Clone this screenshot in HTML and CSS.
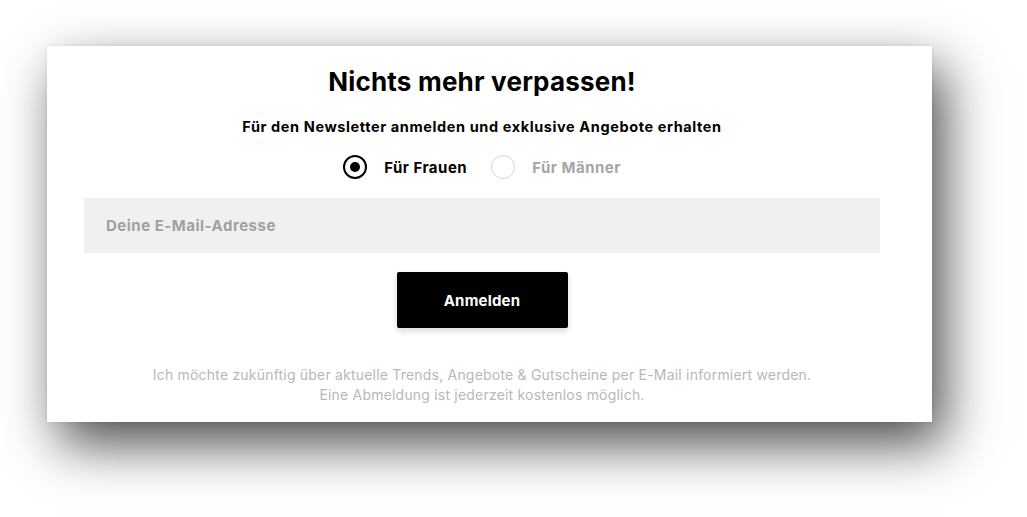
FILE: index.html
```html
<!DOCTYPE html>
<html lang="de">
<head>
<meta charset="utf-8">
<title>Newsletter</title>
<link rel="stylesheet" href="styles.css">
</head>
<body>
<div class="card">
  <h1 class="title">Nichts mehr verpassen!</h1>
  <p class="subtitle">Für den Newsletter anmelden und exklusive Angebote erhalten</p>
  <div class="radios">
    <label class="radio">
      <span class="dot dot-on"></span>
      <span class="radio-label">Für Frauen</span>
    </label>
    <label class="radio radio-off">
      <span class="dot"></span>
      <span class="radio-label">Für Männer</span>
    </label>
  </div>
  <div class="field">Deine E-Mail-Adresse</div>
  <div class="actions"><button class="btn">Anmelden</button></div>
  <p class="legal">Ich möchte zukünftig über aktuelle Trends, Angebote &amp; Gutscheine per E-Mail informiert werden.<br>Eine Abmeldung ist jederzeit kostenlos möglich.</p>
</div>
</body>
</html>
```
FILE: styles.css
```css
html, body {
  margin: 0;
  padding: 0;
  background: #ffffff;
}
body {
  min-height: 517px;
  overflow: hidden;
  font-family: "Inter", "Liberation Sans", sans-serif;
  color: #000;
}
.card {
  box-sizing: border-box;
  margin: 46px 0 0 47px;
  width: 885px;
  height: 376px;
  background: #fff;
  padding: 19px 52px 0 37px;
  box-shadow: 12px 22px 50px rgba(0, 0, 0, 0.7), 0 0 4px rgba(0, 0, 0, 0.08);
}
.title {
  margin: 0;
  text-align: center;
  font-size: 26px;
  line-height: 34px;
  font-weight: 700;
  letter-spacing: 0.2px;
}
.subtitle {
  margin: 18px 0 0;
  text-align: center;
  font-size: 14.5px;
  line-height: 20px;
  font-weight: 700;
  letter-spacing: 0.6px;
}
.radios {
  display: flex;
  justify-content: center;
  gap: 24px;
  margin-top: 15px;
  height: 30px;
  align-items: center;
}
.radio {
  display: flex;
  align-items: center;
  gap: 17px;
  font-size: 15px;
  font-weight: 700;
  letter-spacing: 0.5px;
}
.radio-off .radio-label {
  color: #a6a6a6;
}
.dot {
  box-sizing: border-box;
  width: 24px;
  height: 24px;
  border-radius: 50%;
  border: 1px solid #d6d6d6;
  display: flex;
  align-items: center;
  justify-content: center;
}
.dot-on {
  border: 2px solid #000;
}
.dot-on::after {
  content: "";
  width: 10px;
  height: 10px;
  border-radius: 50%;
  background: #000;
}
.field {
  margin-top: 16px;
  height: 55px;
  background: #f0f0f0;
  display: flex;
  align-items: center;
  padding-left: 22px;
  font-size: 15px;
  font-weight: 700;
  letter-spacing: 0.5px;
  color: #a0a0a0;
}
.actions {
  display: flex;
  justify-content: center;
  margin-top: 19px;
}
.btn {
  width: 171px;
  height: 56px;
  background: #000;
  color: #fff;
  border: 0;
  border-radius: 2px;
  font-family: inherit;
  font-size: 15px;
  font-weight: 700;
  letter-spacing: 0.2px;
  box-shadow: 0 3px 6px rgba(0, 0, 0, 0.15);
}
.legal {
  margin: 37px 0 0;
  text-align: center;
  font-size: 14px;
  line-height: 20px;
  letter-spacing: 0.2px;
  color: #b8b8b8;
}
```
